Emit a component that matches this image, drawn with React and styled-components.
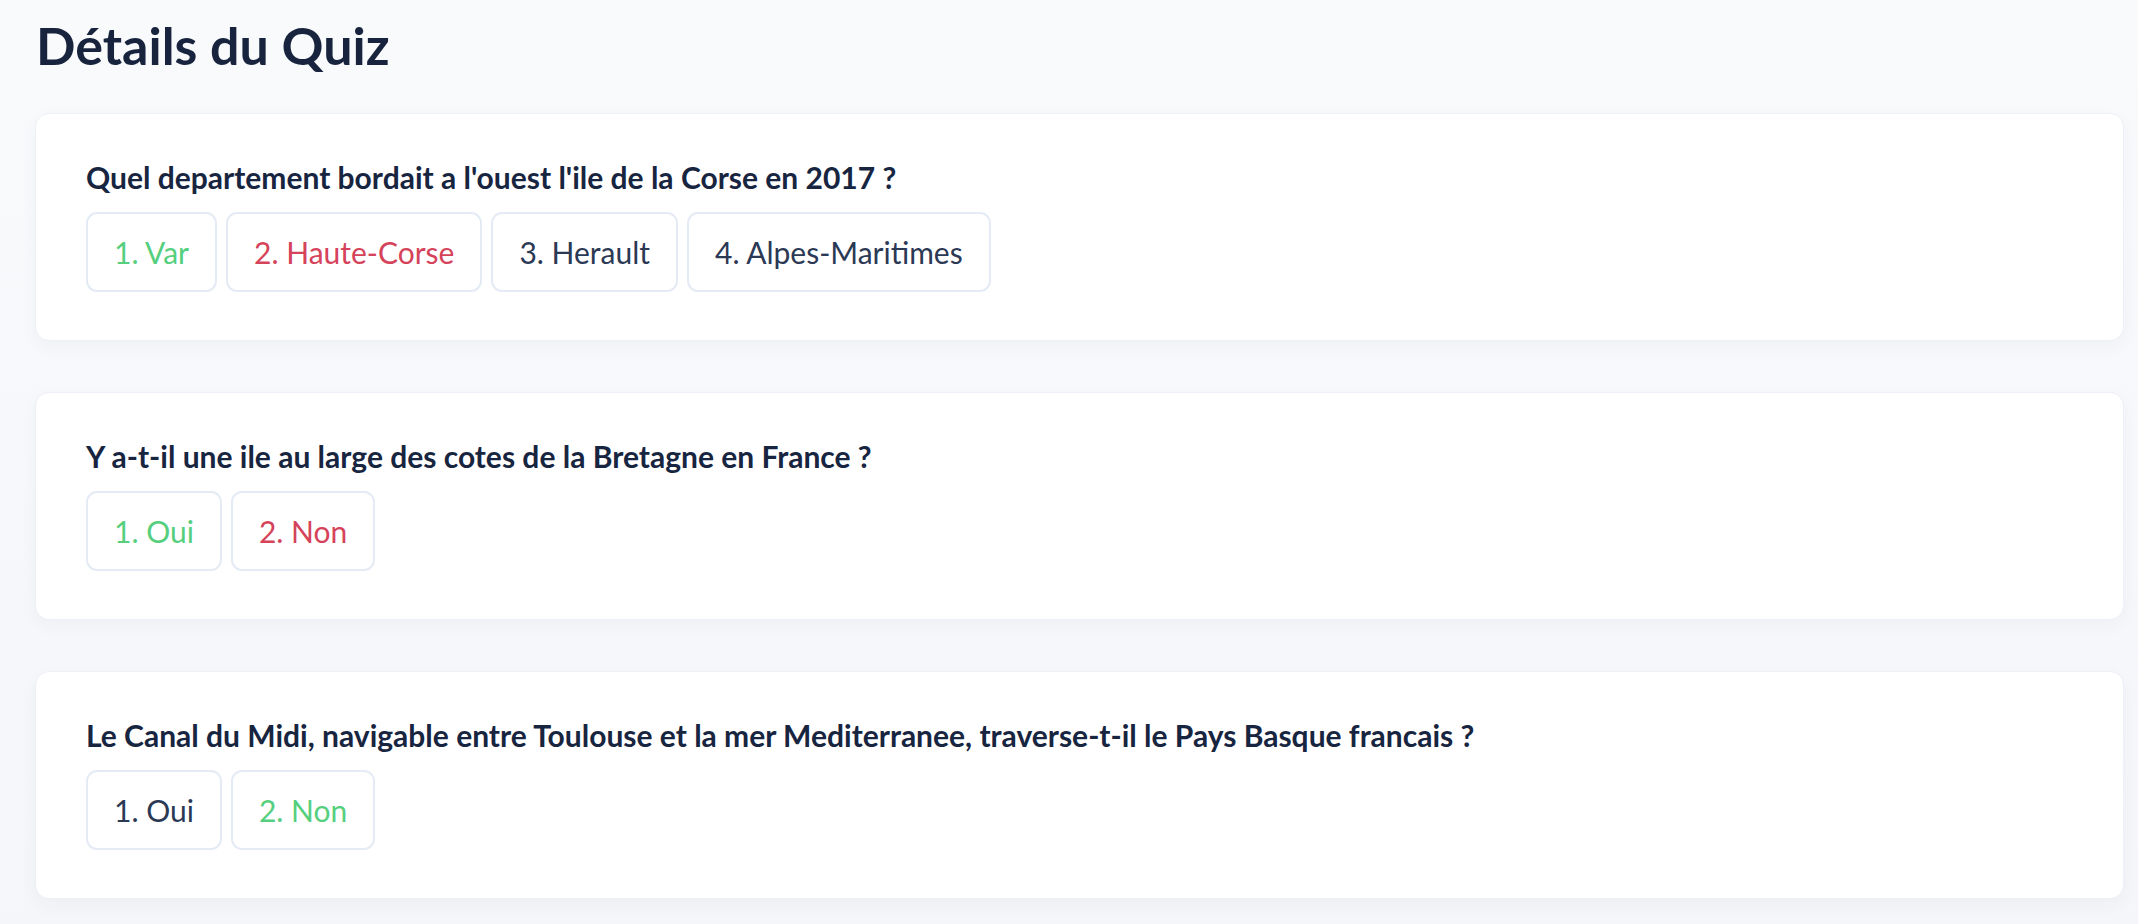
import React from "react";
import styled, { createGlobalStyle } from "styled-components";

const GlobalStyle = createGlobalStyle`
  html, body {
    margin: 0;
    padding: 0;
    background: #f8f9fc;
  }
  body {
    font-family: "Lato", "Noto Sans", sans-serif;
    color: #172540;
  }
`;

const Page = styled.div`
  min-height: 924px;
  box-sizing: border-box;
  padding: 15px 14px 28px 35px;
  background: linear-gradient(180deg, #f9fafc 0%, #f5f6f9 100%);
`;

const Title = styled.h1`
  margin: 0 0 38px 1px;
  font-size: 52px;
  line-height: 60px;
  font-weight: 700;
  color: #18243e;
`;

const QuizList = styled.div`
  display: flex;
  flex-direction: column;
  gap: 51px;
`;

const Card = styled.section`
  background: #ffffff;
  border: 1px solid #edf0f6;
  border-radius: 14px;
  box-shadow: 0 6px 18px rgba(30, 45, 90, 0.04);
  padding: 45px 50px 48px;
`;

const Question = styled.h3`
  margin: 0 0 17px;
  font-size: 30px;
  line-height: 36px;
  font-weight: 700;
  color: #172540;
`;

const Answers = styled.div`
  display: flex;
  flex-wrap: wrap;
  gap: 9px;
`;

const tones = {
  correct: "#55cf7e",
  wrong: "#d5435a",
  neutral: "#2b3955",
};

const Answer = styled.div`
  box-sizing: border-box;
  height: 80px;
  display: flex;
  align-items: center;
  padding: 0 26px;
  border: 2px solid #e5ebf5;
  border-radius: 11px;
  font-size: 30px;
  font-weight: 400;
  color: ${(p) => tones[p.$tone]};
`;

const quiz = [
  {
    question: "Quel departement bordait a l'ouest l'ile de la Corse en 2017 ?",
    answers: [
      { label: "Var", tone: "correct" },
      { label: "Haute-Corse", tone: "wrong" },
      { label: "Herault", tone: "neutral" },
      { label: "Alpes-Maritimes", tone: "neutral" },
    ],
  },
  {
    question: "Y a-t-il une ile au large des cotes de la Bretagne en France ?",
    answers: [
      { label: "Oui", tone: "correct" },
      { label: "Non", tone: "wrong" },
    ],
  },
  {
    question:
      "Le Canal du Midi, navigable entre Toulouse et la mer Mediterranee, traverse-t-il le Pays Basque francais ?",
    answers: [
      { label: "Oui", tone: "neutral" },
      { label: "Non", tone: "correct" },
    ],
  },
];

export default function App() {
  return (
    <>
      <GlobalStyle />
      <Page>
        <Title>Détails du Quiz</Title>
        <QuizList>
          {quiz.map((q, i) => (
            <Card key={i}>
              <Question>{q.question}</Question>
              <Answers>
                {q.answers.map((a, j) => (
                  <Answer key={j} $tone={a.tone}>
                    {j + 1}. {a.label}
                  </Answer>
                ))}
              </Answers>
            </Card>
          ))}
        </QuizList>
      </Page>
    </>
  );
}
